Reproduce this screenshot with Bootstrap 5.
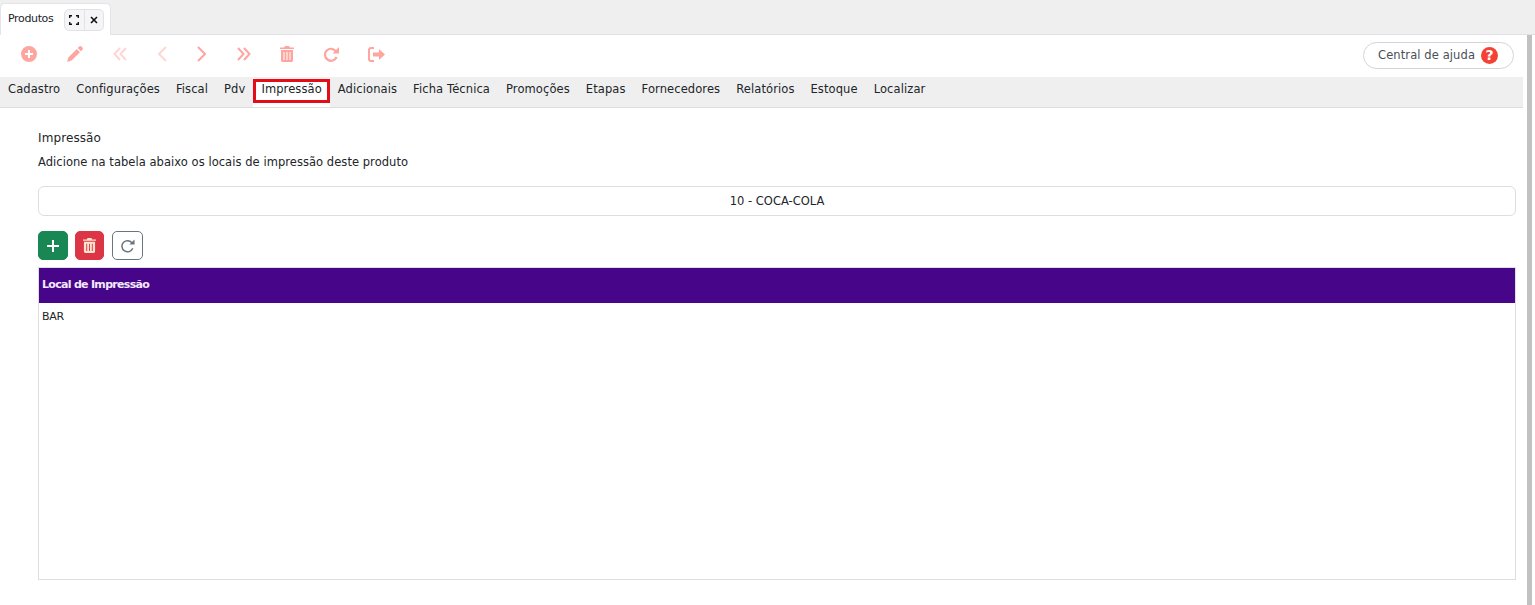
<!DOCTYPE html>
<html lang="pt-BR">
<head>
    <meta charset="UTF-8">
    <meta name="viewport" content="width=device-width, initial-scale=1.0">
    <title>Produtos</title>
    <link href="https://cdn.jsdelivr.net/npm/bootstrap@5.3.0/dist/css/bootstrap.min.css" rel="stylesheet">
    <style>
        html, body {
            height: 605px;
            overflow: hidden;
        }
        body {
            font-family: "DejaVu Sans", sans-serif;
            font-size: 11.5px;
            color: #212529;
            background: #fff;
        }
        .page-wrap {
            height: 605px;
            padding-right: 12px;
        }
        .scroll-track {
            top: 35px;
            right: 3px;
            bottom: 0;
            width: 5px;
            background: #c1c1c1;
        }
        .tab-strip {
            height: 35px;
            margin-right: -12px;
            padding-top: 3px;
            background: #efefef;
            border-bottom: 1px solid #e0e0e6;
        }
        .tab-item {
            width: 111px;
            height: 32px;
            padding: 5px 6px 0 7px;
            background: #fff;
            border: 1px solid #e4e4e8;
            border-bottom: 0;
            border-radius: 5px 5px 0 0;
            font-size: 11px;
            letter-spacing: -.35px;
        }
        .tab-label {
            line-height: 20px;
        }
        .tab-tools {
            width: 40px;
            height: 22px;
            border: 1px solid #e2e2e6;
            border-radius: 5px;
            overflow: hidden;
            background: #f5f5f7;
        }
        .tab-tools span {
            flex: 1;
        }
        .tab-tools span + span {
            border-left: 1px solid #e2e2e6;
        }
        .tool-band {
            height: 42px;
        }
        .tool-row {
            height: 38px;
            padding-left: 21px;
            gap: 30px;
        }
        .tool-on { color: #ffa5a0; }
        .tool-off { color: #ffd6d3; }
        .tool-tight { margin-left: -1px; }
        .help-pill {
            width: 151px;
            height: 27px;
            margin-top: 7px;
            margin-right: 9px;
            padding-left: 14px;
            gap: 6px;
            border: 1px solid #d4d4d8;
            border-radius: 14px;
            color: #4a4f57;
            letter-spacing: .1px;
        }
        .help-dot {
            width: 17px;
            height: 17px;
            background: #f44336;
            color: #fff;
            font-size: 14px;
            font-weight: 700;
        }
        .menu-strip {
            height: 31px;
            padding-top: 2px;
            background: #efefef;
            border-bottom: 1px solid #dedede;
            letter-spacing: .1px;
        }
        .menu-entry {
            height: 24px;
            padding-left: 8px;
            padding-right: 8px;
            line-height: 20px;
            white-space: nowrap;
        }
        .menu-entry.is-active {
            height: 28px;
            background: #fff;
            position: relative;
        }
        .menu-entry.is-active::after {
            content: "";
            position: absolute;
            inset: 0 0 4px 0;
            border: 3px solid #e30d17;
        }
        .main-area {
            padding: 21px 7px 0 38px;
        }
        .sec-title {
            font-size: 12px;
            letter-spacing: .1px;
            margin-bottom: 6px;
            line-height: 18px;
        }
        .sec-text {
            line-height: 18px;
            letter-spacing: .05px;
            margin-bottom: 15px;
        }
        .product-box {
            height: 30px;
            padding-top: 1px;
            border: 1px solid #dedee2;
            border-radius: 6px;
            margin-bottom: 15px;
        }
        .act-group {
            gap: 7px;
        }
        .act-btn {
            height: 29px;
            padding: 0;
            border-radius: 5px;
        }
        .act-add { width: 30px; }
        .act-del { width: 29px; }
        .act-ref { width: 31px; margin-left: 1px; border-color: #6c757d; }
        .print-table {
            height: 313px;
            margin-top: 7px;
            border: 1px solid #dedede;
        }
        .print-head {
            height: 35px;
            padding-left: 3px;
            background: #47068a;
            color: #f3eaff;
            font-size: 11px;
            font-weight: 700;
            letter-spacing: -.7px;
        }
        .print-row {
            padding: 6px 3px;
            font-size: 11px;
            line-height: 16px;
            letter-spacing: -.3px;
        }
    </style>
</head>
<body>
    <div class="page-wrap position-relative">
        <div class="scroll-track position-absolute"></div>

        <div class="tab-strip d-flex">
            <div class="tab-item d-flex justify-content-between">
                <span class="tab-label">Produtos</span>
                <div class="tab-tools d-flex">
                    <span class="d-flex align-items-center justify-content-center">
                        <svg width="10" height="10" viewBox="0 0 10 10" fill="none" stroke="#111" stroke-width="1.4"><path d="M.7 3V.7H3M7 .7h2.3V3M9.3 7v2.3H7M3 9.3H.7V7"/></svg>
                    </span>
                    <span class="d-flex align-items-center justify-content-center">
                        <svg width="8" height="8" viewBox="0 0 8 8" fill="none" stroke="#111" stroke-width="1.6"><path d="M1 1l6 6M7 1L1 7"/></svg>
                    </span>
                </div>
            </div>
        </div>

        <div class="tool-band d-flex justify-content-between">
            <div class="tool-row d-flex align-items-center">
                <svg class="tool-on" width="16" height="16" viewBox="0 0 16 16"><path fill="currentColor" fill-rule="evenodd" d="M8 0a8 8 0 1 1 0 16A8 8 0 0 1 8 0zM7 4v3H4v2h3v3h2V9h3V7H9V4z"/></svg>
                <svg class="tool-on" width="16" height="16" viewBox="0 0 16 16"><path fill="currentColor" d="M12.2.6a1.6 1.6 0 0 1 2.2 0l1 1a1.6 1.6 0 0 1 0 2.2l-1.5 1.5-3.2-3.2zM9.8 3l3.2 3.2-8.4 8.4L0 16l1.4-4.6z"/></svg>
                <svg class="tool-off" width="14" height="14" viewBox="0 0 14 14" fill="none" stroke="currentColor" stroke-width="2"><path d="M7 1L1.500 7 7 13M13 1L7.500 7l5.500 6"/></svg>
                <svg class="tool-off" width="10" height="16" viewBox="0 0 10 16" fill="none" stroke="currentColor" stroke-width="2"><path d="M9 1L2 8l7 7"/></svg>
                <svg class="tool-on" width="10" height="16" viewBox="0 0 10 16" fill="none" stroke="currentColor" stroke-width="2"><path d="M1 1l7 7-7 7"/></svg>
                <svg class="tool-on" width="14" height="14" viewBox="0 0 14 14" fill="none" stroke="currentColor" stroke-width="2"><path d="M1 1l5.500 6L1 13M7 1l5.500 6L7 13"/></svg>
                <svg class="tool-on tool-tight" width="14" height="16" viewBox="0 0 14 16"><path fill="currentColor" fill-rule="evenodd" d="M5 0h4l1 1.500h4V3H0V1.500h4zM1 4h12v10.500a1.500 1.500 0 0 1-1.500 1.500h-9A1.500 1.500 0 0 1 1 14.500zm2.500 2v8h1V6zm3 0v8h1V6zm3 0v8h1V6z"/></svg>
                <svg class="tool-on" width="15" height="15" viewBox="0 0 15 15" fill="none"><path stroke="currentColor" stroke-width="2.200" d="M12.600 10a6 6 0 1 1-.6-5.600"/><path fill="currentColor" d="M15 0v6.500H8.500z"/></svg>
                <svg class="tool-on tool-tight" width="17" height="15" viewBox="0 0 17 15"><path fill="none" stroke="currentColor" stroke-width="2" d="M6 1H3a2 2 0 0 0-2 2v9a2 2 0 0 0 2 2h3"/><path fill="currentColor" d="M11 2l6 5.500-6 5.500V9.500H5v-4h6z"/></svg>
            </div>
            <div class="help-pill d-flex align-items-center">
                <span>Central de ajuda</span>
                <span class="help-dot rounded-circle d-flex align-items-center justify-content-center">?</span>
            </div>
        </div>

        <div class="menu-strip d-flex">
            <div class="menu-entry">Cadastro</div>
            <div class="menu-entry">Configurações</div>
            <div class="menu-entry">Fiscal</div>
            <div class="menu-entry">Pdv</div>
            <div class="menu-entry is-active">Impressão</div>
            <div class="menu-entry">Adicionais</div>
            <div class="menu-entry">Ficha Técnica</div>
            <div class="menu-entry">Promoções</div>
            <div class="menu-entry">Etapas</div>
            <div class="menu-entry">Fornecedores</div>
            <div class="menu-entry">Relatórios</div>
            <div class="menu-entry">Estoque</div>
            <div class="menu-entry">Localizar</div>
        </div>

        <div class="main-area">
            <div class="sec-title">Impressão</div>
            <div class="sec-text">Adicione na tabela abaixo os locais de impressão deste produto</div>
            <div class="product-box d-flex align-items-center justify-content-center">10 - COCA-COLA</div>
            <div class="act-group d-flex">
                <button class="btn btn-success act-btn act-add d-flex align-items-center justify-content-center">
                    <svg width="12" height="12" viewBox="0 0 12 12"><path fill="#fff" d="M5 0h2v5h5v2H7v5H5V7H0V5h5z"/></svg>
                </button>
                <button class="btn btn-danger act-btn act-del d-flex align-items-center justify-content-center">
                    <svg width="13" height="15" viewBox="0 0 14 16"><path fill="#ffe3cf" fill-rule="evenodd" d="M5 0h4l1 1.500h4V3H0V1.500h4zM1 4h12v10.500a1.500 1.500 0 0 1-1.500 1.500h-9A1.500 1.500 0 0 1 1 14.500zm2.500 2v8h1V6zm3 0v8h1V6zm3 0v8h1V6z"/></svg>
                </button>
                <button class="btn btn-outline-secondary act-btn act-ref d-flex align-items-center justify-content-center">
                    <svg width="14" height="14" viewBox="0 0 15 15" fill="none"><path stroke="#6c757d" stroke-width="1.600" d="M12.600 10a6 6 0 1 1-.6-5.600"/><path fill="#6c757d" d="M14.500 .5v5.500H9z"/></svg>
                </button>
            </div>
            <div class="print-table">
                <div class="print-head d-flex align-items-center">Local de Impressão</div>
                <div class="print-row">BAR</div>
            </div>
        </div>
    </div>
</body>
</html>
